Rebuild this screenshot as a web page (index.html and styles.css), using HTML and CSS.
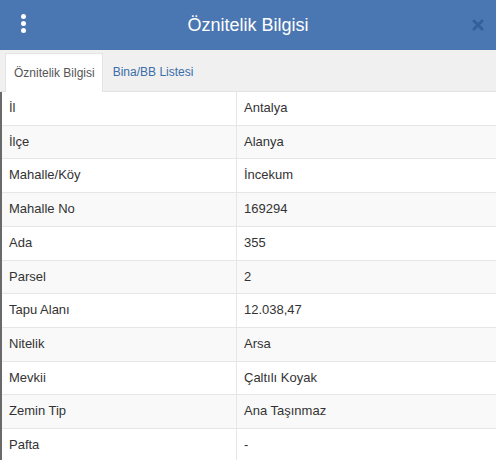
FILE: index.html
```html
<!DOCTYPE html>
<html lang="tr">
<head>
	<meta charset="utf-8" />
	<title>Öznitelik Bilgisi</title>
	<link rel="stylesheet" href="styles.css">
</head>
<body>
	<div id="panel">
		<div id="header">
			<span class="menu"><i></i><i></i><i></i></span>
			<h1>Öznitelik Bilgisi</h1>
			<svg class="close" width="12" height="12" viewBox="0 0 12 12">
				<path d="M2 2 L10 10 M10 2 L2 10" stroke="currentColor" stroke-width="3" stroke-linecap="round" />
			</svg>
		</div>
		<div id="tabs">
			<div class="tab active">Öznitelik Bilgisi</div>
			<div class="tab">Bina/BB Listesi</div>
		</div>
		<table id="attrs">
			<tr><td>İl</td><td>Antalya</td></tr>
			<tr><td>İlçe</td><td>Alanya</td></tr>
			<tr><td>Mahalle/Köy</td><td>İncekum</td></tr>
			<tr><td>Mahalle No</td><td>169294</td></tr>
			<tr><td>Ada</td><td>355</td></tr>
			<tr><td>Parsel</td><td>2</td></tr>
			<tr><td>Tapu Alanı</td><td>12.038,47</td></tr>
			<tr><td>Nitelik</td><td>Arsa</td></tr>
			<tr><td>Mevkii</td><td>Çaltılı Koyak</td></tr>
			<tr><td>Zemin Tip</td><td>Ana Taşınmaz</td></tr>
			<tr><td>Pafta</td><td>-</td></tr>
		</table>
	</div>
</body>
</html>
```

FILE: styles.css
```css
body {
	margin: 0;
	font-family: "Liberation Sans", Arial, sans-serif;
	background-color: #fff;
	overflow: hidden;
}
#header {
	position: relative;
	height: 50px;
	display: flex;
	align-items: center;
	justify-content: center;
	background-color: #4a77b2;
	color: #fff;
}
#header > h1 {
	margin: 0;
	font-size: 18px;
	font-weight: normal;
}
.menu {
	position: absolute;
	left: 21px;
	top: 14px;
	display: flex;
	flex-direction: column;
	gap: 2px;
}
.menu > i {
	width: 5px;
	height: 5px;
	border-radius: 50%;
	background-color: #fff;
}
.close {
	position: absolute;
	right: 12px;
	top: 19px;
	color: #34609a;
}
#tabs {
	display: flex;
	height: 42px;
	padding: 3px 0 0 5px;
	box-sizing: border-box;
	background-color: #f0f0f0;
	border-bottom: 1px solid #e2e2e2;
	font-size: 12px;
}
.tab {
	display: flex;
	align-items: center;
	padding: 0 7px 0 8px;
	margin-right: 2px;
	color: #3a6ea8;
}
.tab.active {
	background-color: #fff;
	color: #555;
	border: 1px solid #e4e4e4;
	border-bottom: none;
	margin-bottom: -1px;
}
#attrs {
	width: 100%;
	border-collapse: collapse;
	font-size: 13px;
	color: #333;
	border-left: 2px solid #6a6a6a;
}
#attrs td {
	padding: 7px 8px 7px 7px;
	line-height: 18.7px;
	border-top: 1px solid #e6e6e6;
}
#attrs tr:first-child td {
	border-top: none;
}
#attrs td:first-child {
	width: 219px;
	border-right: 1px solid #e6e6e6;
}
#attrs tr:nth-child(even) {
	background-color: #f9f9f9;
}
```
